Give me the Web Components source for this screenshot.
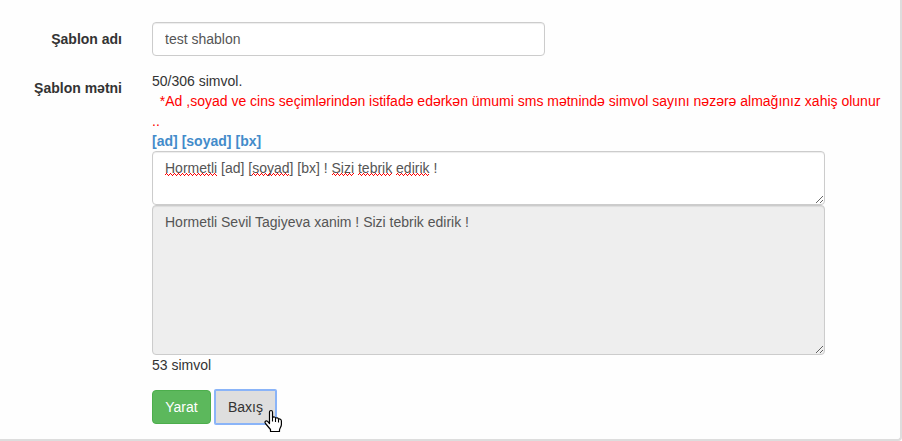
<!DOCTYPE html>
<html lang="az">
<head>
<meta charset="utf-8">
<title>Şablon</title>
<style>
*{box-sizing:border-box}
body{margin:0;background:#fff;color:#333;font:14px/20px "Liberation Sans",Arial,sans-serif}
</style>
</head>
<body>
<template id="t-page">
<style>
:host{display:block}
form{display:flex;flex-direction:column;gap:15px;padding:22px 0 15px;border:solid #ddd;border-width:0 2px 2px 0;border-radius:0 0 4px 0;background:#fefefe}
</style>
<form onsubmit="return false"><slot></slot></form>
</template>

<template id="t-row">
<style>
:host{display:grid;grid-template-columns:122px minmax(0,1fr);column-gap:30px}
label{padding-top:7px;text-align:right;font-weight:bold}
.body{display:flex;flex-direction:column;align-items:flex-start}
input{display:block;box-sizing:border-box;width:52.5%;height:34px;margin:0;padding:6px 12px;border:1px solid #ccc;border-radius:4px;background:#fff;color:#555;font:inherit;box-shadow:inset 0 1px 1px rgba(0,0,0,.075);outline:0}
</style>
<label></label>
<div class="body"><slot></slot></div>
</template>

<template id="t-message">
<style>
:host{display:flex;flex-direction:column;align-items:flex-start;width:100%}
.note{margin:0;color:#f00;white-space:pre-wrap}
nav{display:flex;gap:4px;font-weight:bold}
a{color:#428bca;text-decoration:none}
.editor{position:relative;width:90%}
textarea{display:block;box-sizing:border-box;width:100%;height:54px;margin:0;padding:6px 12px;border:1px solid #ccc;border-radius:4px;background:#fff;color:#555;font:inherit;box-shadow:inset 0 1px 1px rgba(0,0,0,.075);outline:0;overflow:hidden;resize:vertical}
.preview{width:90%;height:150px;background:#eee}
svg{position:absolute;left:13px;top:22px;pointer-events:none}
svg path{fill:none;stroke:#f00;stroke-width:1px}
</style>
<output>50/306 simvol.</output>
<p class="note">  *Ad ,soyad ve cins seçimlərindən istifadə edərkən ümumi sms mətnində simvol sayını nəzərə almağınız xahiş olunur<br>..</p>
<nav><a href="#ad">[ad]</a><a href="#soyad">[soyad]</a><a href="#bx">[bx]</a></nav>
<div class="editor">
<textarea id="text" spellcheck="false" aria-label="Şablon mətni">Hormetli [ad] [soyad] [bx] ! Sizi tebrik edirik !</textarea>
<svg width="280" height="3" aria-hidden="true">
<path stroke-dasharray="1 3" stroke-dashoffset="-1" d="M0 .5H52M87 .5H124M167 .5H189M193 .5H227M231 .5H264"/>
<path stroke-dasharray="1 1" d="M0 1.5H52M87 1.5H124M167 1.5H189M193 1.5H227M231 1.5H264"/>
<path stroke-dasharray="1 3" stroke-dashoffset="-3" d="M0 2.5H52M87 2.5H124M167 2.5H189M193 2.5H227M231 2.5H264"/>
</svg>
</div>
<textarea class="preview" readonly aria-label="Baxış">Hormetli Sevil Tagiyeva xanim ! Sizi tebrik edirik !</textarea>
<output>53 simvol</output>
</template>

<template id="t-actions">
<style>
:host{display:flex;gap:4px;padding-left:152px}
button{min-width:59px;height:34px;margin:0;padding:6px 12px;border:1px solid #4cae4c;border-radius:4px;background:#5cb85c;color:#fff;font:inherit;cursor:pointer}
.view{position:relative;border-color:#8ab4f8;border-radius:1px;background:#dedede;color:#333;box-shadow:0 0 0 1px #8ab4f8}
svg{position:absolute;left:48px;top:18px}
</style>
<button type="submit">Yarat</button>
<button type="button" class="view">Baxış<svg width="19" height="24" viewBox="0 0 19 24" aria-hidden="true"><path d="M5.5 14.5V3.2C5.5.9 8.5.9 8.5 3.2V8.6C9.5 7.4 11.6 7.9 11.6 9.3C12.6 8.3 14.5 8.8 14.5 10.2C15.7 9.5 17.4 10.3 17.4 12V15.5C17.4 18 15.5 19.3 15.5 21V22.5H6.5V20.5L1.5 14.5C.2 12.7 2 11 3.6 12.4Z" fill="#fff" stroke="#000" stroke-width="1.2" stroke-linejoin="round"/><path d="M8.5 8.5V12.5M11.5 9.3V13M14.5 10.2V13.5" stroke="#000" stroke-width="1.1"/></svg></button>
</template>

<form-panel>
<form-row label="Şablon adı" value="test shablon"></form-row>
<form-row label="Şablon mətni"><message-editor></message-editor></form-row>
<form-actions></form-actions>
</form-panel>

<script>
class TemplateElement extends HTMLElement{
  constructor(){
    super();
    this.attachShadow({mode:'open'}).append(document.getElementById(this.constructor.template).content.cloneNode(true));
  }
}
customElements.define('form-panel',class extends TemplateElement{static template='t-page'});
customElements.define('message-editor',class extends TemplateElement{
  static template='t-message';
  focusText(){this.shadowRoot.getElementById('text').focus()}
});
customElements.define('form-actions',class extends TemplateElement{static template='t-actions'});
customElements.define('form-row',class extends TemplateElement{
  static template='t-row';
  connectedCallback(){
    const label=this.shadowRoot.querySelector('label');
    label.textContent=this.getAttribute('label');
    if(this.hasAttribute('value')){
      const input=document.createElement('input');
      input.type='text';
      input.id='field';
      input.value=this.getAttribute('value');
      label.htmlFor='field';
      this.shadowRoot.querySelector('.body').replaceChildren(input);
    }else{
      label.addEventListener('click',()=>this.querySelector('message-editor').focusText());
    }
  }
});
</script>
</body>
</html>
